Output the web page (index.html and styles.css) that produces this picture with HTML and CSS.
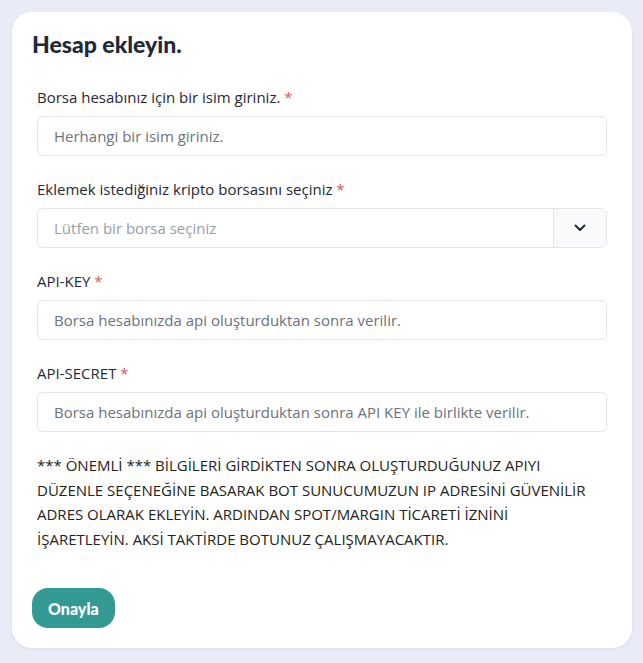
FILE: index.html
```html
<!DOCTYPE html>
<html lang="tr">
<head>
    <meta charset="UTF-8">
    <meta name="viewport" content="width=device-width, initial-scale=1.0">
    <title>Hesap ekleyin</title>
    <link rel="stylesheet" href="styles.css">
</head>
<body>

<div class="card">
    <h1 class="card-title">Hesap ekleyin.</h1>

    <form class="account-form" onsubmit="return false;">
        <div class="field">
            <label class="field-label">Borsa hesabınız için bir isim giriniz. <span class="req">*</span></label>
            <input class="field-input" type="text" placeholder="Herhangi bir isim giriniz.">
        </div>

        <div class="field">
            <label class="field-label">Eklemek istediğiniz kripto borsasını seçiniz <span class="req">*</span></label>
            <div class="select-group">
                <div class="select-value">Lütfen bir borsa seçiniz</div>
                <div class="select-btn">
                    <svg width="12" height="8" viewBox="0 0 12 8"><path d="M1.5 1.5 L6 6 L10.5 1.5" fill="none" stroke="#1f2937" stroke-width="2" stroke-linecap="round" stroke-linejoin="round"/></svg>
                </div>
            </div>
        </div>

        <div class="field">
            <label class="field-label">API-KEY <span class="req">*</span></label>
            <input class="field-input" type="text" placeholder="Borsa hesabınızda api oluşturduktan sonra verilir.">
        </div>

        <div class="field">
            <label class="field-label">API-SECRET <span class="req">*</span></label>
            <input class="field-input" type="text" placeholder="Borsa hesabınızda api oluşturduktan sonra API KEY ile birlikte verilir.">
        </div>

        <p class="notice">*** ÖNEMLİ *** BİLGİLERİ GİRDİKTEN SONRA OLUŞTURDUĞUNUZ APIYI DÜZENLE SEÇENEĞİNE BASARAK BOT SUNUCUMUZUN IP ADRESİNİ GÜVENİLİR ADRES OLARAK EKLEYİN. ARDINDAN SPOT/MARGIN TİCARETİ İZNİNİ İŞARETLEYİN. AKSİ TAKTİRDE BOTUNUZ ÇALIŞMAYACAKTIR.</p>
    </form>

    <button class="btn-confirm" type="button">Onayla</button>
</div>

</body>
</html>
```

FILE: styles.css
```css
body { margin: 0; padding: 12px 11px 12px 12px; background-color: #e9ecf6; font-family: "Open Sans", Arial, sans-serif; color: #1f2937; }

.card { background: #fff; border-radius: 20px; padding: 17px 0 20px 0; box-shadow: 0 1px 3px rgba(30, 40, 90, 0.08); }
.card-title { margin: 0 0 0 20px; font-family: Lato, "Open Sans", sans-serif; font-size: 23px; line-height: 30px; font-weight: 900; color: #1e293b; }

.account-form { padding: 0 25px; margin-top: 27px; }
.field { margin-bottom: 22px; }
.field-label { display: block; font-size: 15px; line-height: 22px; margin-bottom: 8px; color: #1f2937; }
.req { color: #e05555; }

.field-input { display: block; box-sizing: border-box; width: 100%; height: 40px; padding: 0 16px; border: 1px solid #e3e5ea; border-radius: 6px; font-family: inherit; font-size: 15px; color: #1f2937; background: #fff; outline: none; }
.field-input::placeholder { color: #6b7280; }

.select-group { display: flex; height: 40px; box-sizing: border-box; border: 1px solid #e3e5ea; border-radius: 6px; overflow: hidden; }
.select-value { flex: 1; display: flex; align-items: center; padding: 0 16px; font-size: 15px; color: #979ea8; }
.select-btn { width: 52px; display: flex; align-items: center; justify-content: center; background: #f9fafb; border-left: 1px solid #e3e5ea; }

.notice { margin: -1px 0 0 0; max-width: 566px; font-size: 15px; line-height: 24.5px; color: #222; }

.btn-confirm { margin: 37px 0 0 20px; height: 40px; padding: 0 16px; border: none; border-radius: 16px; background-color: #339993; color: #fff; font-family: Lato, "Open Sans", sans-serif; font-size: 16px; font-weight: 900; cursor: pointer; }
```
